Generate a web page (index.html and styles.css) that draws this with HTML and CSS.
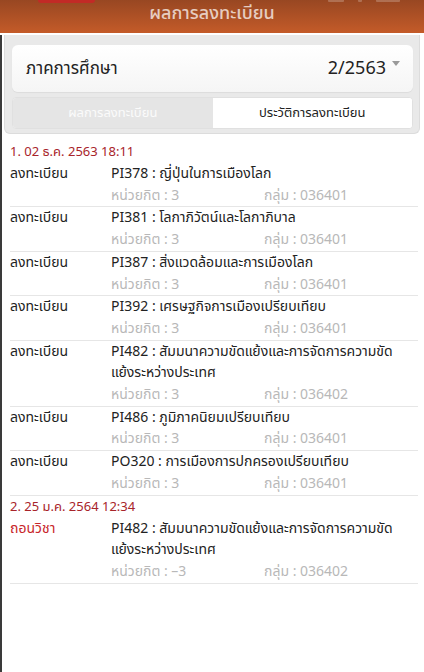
FILE: index.html
```html
<!DOCTYPE html>
<html lang="th">
<head>
  <meta charset="UTF-8" />
  <title>ผลการลงทะเบียน</title>
  <link rel="stylesheet" href="styles.css">
</head>
<body>
  <div class="topbar">
    <span class="notch"></span>
    <span class="status">
      <i class="sig"></i><i class="dot"></i><i class="batt"></i>
    </span>
    <h1>ผลการลงทะเบียน</h1>
  </div>

  <div class="page">
    <div class="filter">
      <div class="term">
        <span>ภาคการศึกษา</span>
        <span class="term-value">2/2563 <i class="caret"></i></span>
      </div>
      <div class="tabs">
        <div class="tab">ผลการลงทะเบียน</div>
        <div class="tab active">ประวัติการลงทะเบียน</div>
      </div>
    </div>

    <div class="history" id="history"></div>
  </div>

  <script>
    // ประวัติการลงทะเบียน
    var records = [
      {
        when: '1. 02 ธ.ค. 2563 18:11',
        items: [
          { act: 'ลงทะเบียน', code: 'PI378', name: 'ญี่ปุ่นในการเมืองโลก', credit: '3', group: '036401' },
          { act: 'ลงทะเบียน', code: 'PI381', name: 'โลกาภิวัตน์และโลกาภิบาล', credit: '3', group: '036401' },
          { act: 'ลงทะเบียน', code: 'PI387', name: 'สิ่งแวดล้อมและการเมืองโลก', credit: '3', group: '036401' },
          { act: 'ลงทะเบียน', code: 'PI392', name: 'เศรษฐกิจการเมืองเปรียบเทียบ', credit: '3', group: '036401' },
          { act: 'ลงทะเบียน', code: 'PI482', name: 'สัมมนาความขัดแย้งและการจัดการความขัดแย้งระหว่างประเทศ', credit: '3', group: '036402' },
          { act: 'ลงทะเบียน', code: 'PI486', name: 'ภูมิภาคนิยมเปรียบเทียบ', credit: '3', group: '036401' },
          { act: 'ลงทะเบียน', code: 'PO320', name: 'การเมืองการปกครองเปรียบเทียบ', credit: '3', group: '036401' }
        ]
      },
      {
        when: '2. 25 ม.ค. 2564 12:34',
        items: [
          { act: 'ถอนวิชา', drop: true, code: 'PI482', name: 'สัมมนาความขัดแย้งและการจัดการความขัดแย้งระหว่างประเทศ', credit: '–3', group: '036402' }
        ]
      }
    ];

    var html = '';
    records.forEach(function (h) {
      html += '<div class="when">' + h.when + '</div>';
      h.items.forEach(function (it) {
        html += '<div class="row">' +
          '<div class="act' + (it.drop ? ' drop' : '') + '">' + it.act + '</div>' +
          '<div class="info">' +
            '<div class="course">' + it.code + ' : ' + it.name + '</div>' +
            '<div class="meta"><span>หน่วยกิต : ' + it.credit + '</span><span>กลุ่ม : ' + it.group + '</span></div>' +
          '</div>' +
        '</div>';
      });
    });
    document.getElementById('history').innerHTML = html;
  </script>
</body>
</html>
```

FILE: styles.css
```css
/* ---------- พื้นฐาน ---------- */
body {
  margin: 0;
  padding: 0;
  font-family: "Noto Sans Thai", "Noto Sans", sans-serif;
  background: #fff;
  color: #222;
}

/* ----- แถบหัวเรื่อง ----- */
.topbar {
  position: relative;
  height: 33px;
  background: linear-gradient(to bottom, #984722, #c45b29);
  text-align: center;
}
.topbar h1 {
  margin: 0;
  padding-top: 2px;
  font-size: 18px;
  font-weight: 500;
  line-height: 24px;
  color: rgba(255, 255, 255, 0.72);
}
.notch {
  position: absolute;
  left: 38px;
  top: 0;
  width: 57px;
  height: 3px;
  background: #c22a26;
  border-radius: 0 0 4px 4px;
}
.status {
  position: absolute;
  top: 0;
  right: 24px;
  display: flex;
  gap: 14px;
}
.status i {
  display: block;
  height: 2px;
  background: rgba(255, 255, 255, 0.22);
  border-radius: 0 0 1px 1px;
}
.status .sig { width: 16px; }
.status .dot { width: 4px; }
.status .batt { width: 24px; }

/* ----- เนื้อหา ----- */
.page {
  border-left: 2px solid #3a3a3a;
  min-height: calc(100vh - 33px);
  box-sizing: border-box;
}
.filter {
  margin: 2px 4px 0 2px;
  padding: 10px 6px 4px 7px;
  background: #e9e9e9;
  border: 1px solid #dcdcdc;
  border-top: none;
  border-radius: 0 0 6px 6px;
}
.term {
  height: 47px;
  display: flex;
  align-items: center;
  justify-content: space-between;
  padding: 0 13px 0 14px;
  background: linear-gradient(to bottom, #fff, #f5f5f5);
  border-radius: 6px;
  box-shadow: 0 1px 1px rgba(0, 0, 0, 0.06);
  font-size: 17px;
}
.term-value {
  display: flex;
  align-items: flex-start;
  gap: 6px;
  font-size: 18px;
}
.caret {
  margin-top: 6px;
  width: 0;
  height: 0;
  border-left: 4px solid transparent;
  border-right: 4px solid transparent;
  border-top: 5px solid #9a9a9a;
}
.tabs {
  display: flex;
  margin-top: 5px;
  height: 30px;
  background: #fff;
  border: 1px solid #e0e0e0;
  border-radius: 4px;
  overflow: hidden;
}
.tab {
  flex: 1;
  display: flex;
  align-items: center;
  justify-content: center;
  font-size: 13px;
  background: #e5e5e5;
  color: #fbfbfb;
}
.tab.active {
  background: #fff;
  color: #222;
}

/* ----- รายการประวัติ ----- */
.history {
  padding: 7px 6px 0 8px;
}
.when {
  line-height: 22px;
  font-size: 13px;
  color: #a8242a;
}
.row {
  display: flex;
  border-bottom: 1px solid #e6e6e6;
  font-size: 14px;
  line-height: 21.7px;
}
.act {
  width: 101px;
  flex: none;
}
.act.drop {
  color: #c8262b;
}
.info {
  flex: 1;
  padding-right: 20px;
}
.meta {
  display: flex;
  color: #b8b8b8;
}
.meta span:first-child {
  width: 153px;
}
```
